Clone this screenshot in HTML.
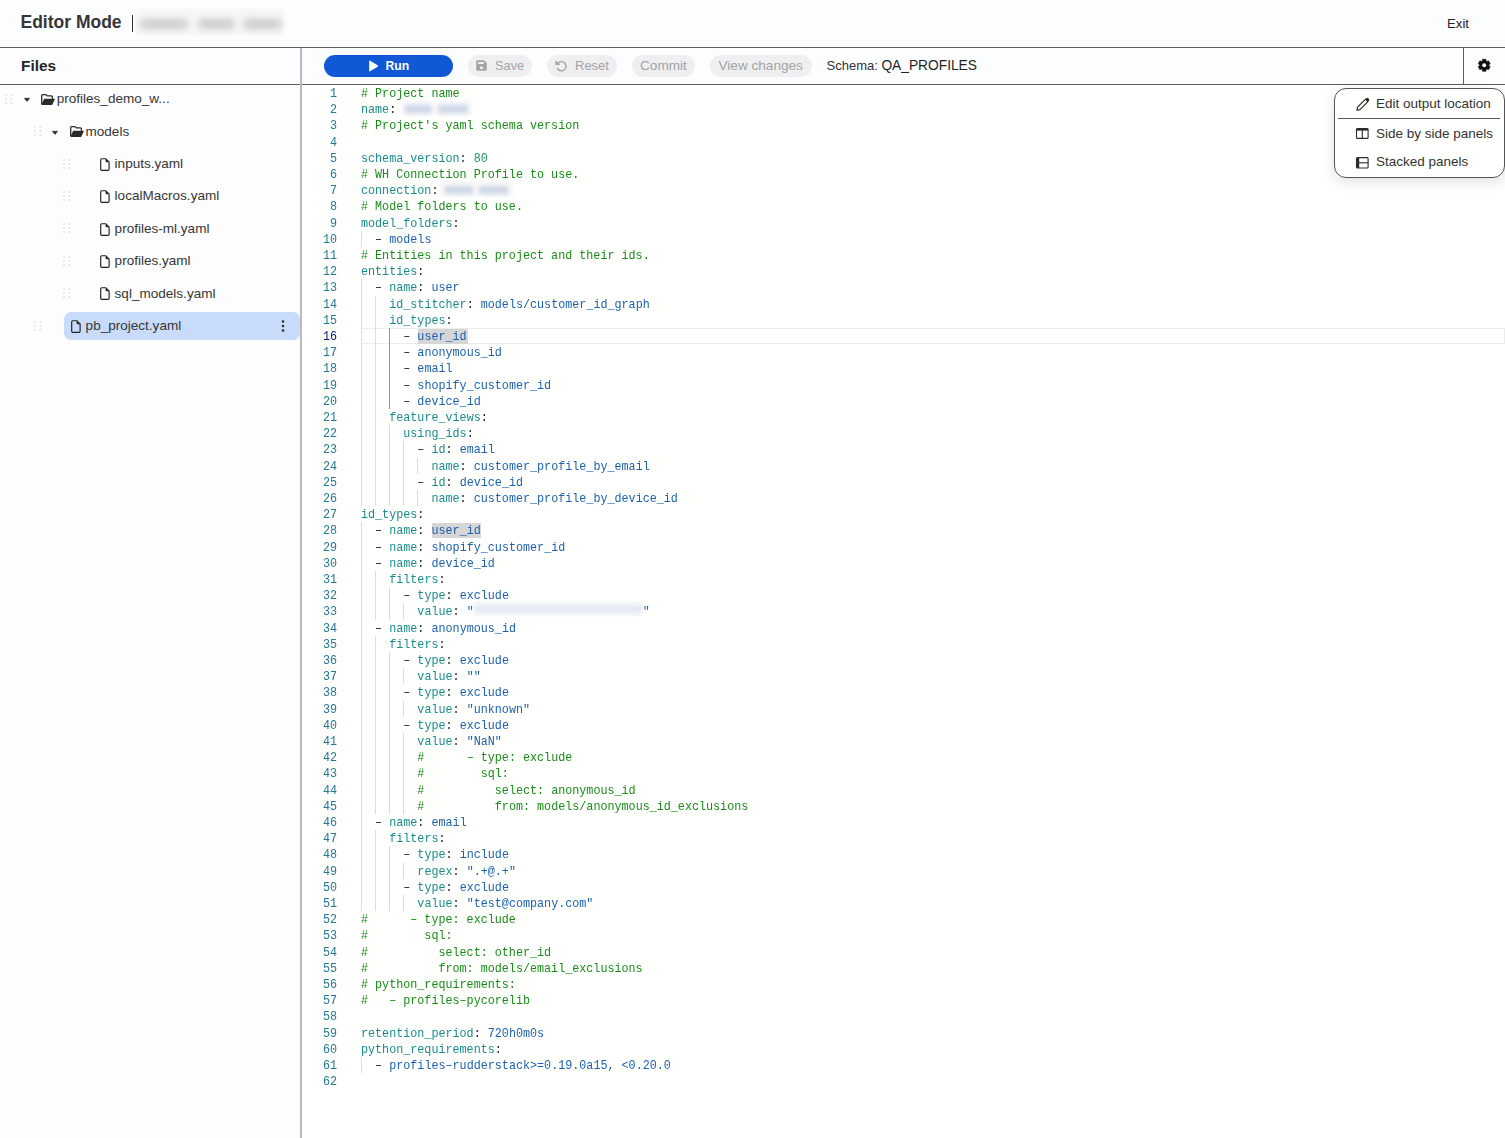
<!DOCTYPE html>
<html><head><meta charset="utf-8">
<style>
*{box-sizing:border-box;margin:0;padding:0}
html,body{width:1505px;height:1138px;overflow:hidden;background:#fffffe;font-family:"Liberation Sans",sans-serif;color:#1f1f1f}
svg{position:absolute;overflow:visible}
#header{position:absolute;left:0;top:0;width:1505px;height:48px;background:#fcfdff;border-bottom:1px solid #5f5f5f}
#title{position:absolute;left:20.5px;top:11px;font-size:17.5px;line-height:22px;font-weight:bold;color:#363636}
#bar{position:absolute;left:131.5px;top:15px;width:1.3px;height:17px;background:#333}
#blurname{position:absolute;left:136px;top:9px;width:148px;height:26px;background:#f7f7f8;filter:blur(1px)}
#blurname i{position:absolute;top:9.5px;height:10px;background:#cbcbcd;filter:blur(3.5px);border-radius:5px}
#exit{position:absolute;left:1447px;top:15px;font-size:13.2px;line-height:18px;color:#262626}
#fileshdr{position:absolute;left:0;top:48px;width:300px;height:37px;background:#fcfdff;border-bottom:1px solid #5f5f5f}
#fileshdr span{position:absolute;left:21px;top:8px;font-size:15.4px;line-height:20px;font-weight:bold;color:#262626}
#vsep{position:absolute;left:300px;top:48px;width:2px;height:1090px;background:#b9b9c0}
#toolbar{position:absolute;left:302px;top:48px;width:1203px;height:37px;background:#fcfdff;border-bottom:1px solid #5f5f5f}
.btn{position:absolute;top:55px;height:22px;border-radius:11px;background:#efeff1;color:#a3a3a6;font-size:13.6px;line-height:22px;white-space:nowrap}
.btn span{position:absolute;top:0}
#run{left:324px;width:129px;background:#1158d6;color:#fff;font-weight:bold;font-size:12.2px}
#schema{position:absolute;left:826.5px;top:56px;font-size:13px;line-height:20px;color:#333;white-space:nowrap}
#schema b{font-weight:normal;font-size:13.75px;color:#1f1f1f}
#gearsep{position:absolute;left:1463px;top:48px;width:1px;height:36px;background:#5f5f5f}
.tree{position:absolute;font-size:13.55px;line-height:20px;color:#363636;white-space:nowrap}
.sel{position:absolute;left:64px;top:312px;width:236px;height:28px;background:#c8dbfa;border-radius:7px}
.num{position:absolute;left:292px;width:45px;height:16.2px;line-height:16.2px;text-align:right;font-family:"Liberation Mono",monospace;font-size:13px;color:#237893;transform:scaleX(0.9026);transform-origin:100% 0}
.num.act{color:#0b216f}
.ln{position:absolute;left:360.8px;opacity:0.9;height:16.2px;line-height:16.2px;font-family:"Liberation Mono",monospace;font-size:13px;white-space:pre;color:#000;transform:scaleX(0.9026);transform-origin:0 0}
.k{color:#008080}.d{color:#000}.s{color:#0451a5}.n{color:#098658}.c{color:#008000}
.hl{}
.hlb{position:absolute;background:#d6d6d6;height:15.4px}
.g{position:absolute;width:1px;height:16.2px;background:#dcdcdc}
.g.ga{background:#939393}
.blur{display:inline-block;position:relative;vertical-align:top;top:-2px;height:15.5px;background:#fafafb}
.b3{top:-3px;height:15px}
.blur i{position:absolute;top:4.5px;height:8px;background:#c6d0e2;filter:blur(2.6px);border-radius:4px}
.b3 i{background:#dfe5f0;top:4px}
#curline{position:absolute;left:361px;top:328px;width:1144px;height:16.2px;border:1px solid #ececec;border-left:none}
#menu{position:absolute;left:1334px;top:88px;width:171px;height:90px;background:#fffffe;border:1px solid #555;border-radius:12px;box-shadow:0 4px 14px rgba(0,0,0,0.12)}
.mi{position:absolute;left:1376px;font-size:13.5px;line-height:18px;color:#333;white-space:nowrap}
#msep{position:absolute;left:1338px;top:118px;width:162px;height:1px;background:#555}
.dots{position:absolute;width:8px;height:10px}
.dots i{position:absolute;width:1.5px;height:1.5px;background:#dcdcdc}
</style></head><body>
<div id="header"></div>
<div id="title">Editor Mode</div>
<div id="bar"></div>
<div id="blurname"><i style="left:4px;width:48px"></i><i style="left:62px;width:37px"></i><i style="left:107px;width:39px"></i></div>
<div id="exit">Exit</div>

<div style="position:absolute;left:0;top:85px;width:300px;height:1053px;background:#fdfdfe"></div>
<div id="fileshdr"><span>Files</span></div>
<div class="sel"></div>
<svg style="left:5.00px;top:92.80px" width="8" height="12"><circle cx="1.00" cy="2.00" r="1" fill="#e3e3e5"/><circle cx="1.00" cy="6.00" r="1" fill="#e3e3e5"/><circle cx="1.00" cy="10.00" r="1" fill="#e3e3e5"/><circle cx="6.40" cy="2.00" r="1" fill="#e3e3e5"/><circle cx="6.40" cy="6.00" r="1" fill="#e3e3e5"/><circle cx="6.40" cy="10.00" r="1" fill="#e3e3e5"/></svg>
<svg style="left:23.50px;top:98.20px" width="6" height="4" viewBox="0 0 6 4"><path d="M0.2 0.2 H5.8 L3 3.6 Z" fill="#1f1f1f" stroke="#1f1f1f" stroke-width="0.4" stroke-linejoin="round"/></svg>
<svg style="left:41.00px;top:93.60px" width="14" height="11" viewBox="0 0 14 11"><path d="M0.7 10.2 V1.6 Q0.7 0.6 1.7 0.6 H4.6 Q5.2 0.6 5.6 1.1 L6.2 1.9 H10.4 Q11.4 1.9 11.4 2.9 V4.8" fill="none" stroke="#2a2a2a" stroke-width="1.3"/><path d="M3.2 4.7 H13.4 Q14 4.7 13.8 5.3 L11.4 10.4 Q11.2 10.9 10.6 10.9 H1 Q0.3 10.9 0.6 10.3 Z" fill="#2a2a2a"/></svg>
<div class="tree" style="left:56.70px;top:88.80px">profiles_demo_w...</div>
<svg style="left:33.80px;top:125.20px" width="8" height="12"><circle cx="1.00" cy="2.00" r="1" fill="#e3e3e5"/><circle cx="1.00" cy="6.00" r="1" fill="#e3e3e5"/><circle cx="1.00" cy="10.00" r="1" fill="#e3e3e5"/><circle cx="6.40" cy="2.00" r="1" fill="#e3e3e5"/><circle cx="6.40" cy="6.00" r="1" fill="#e3e3e5"/><circle cx="6.40" cy="10.00" r="1" fill="#e3e3e5"/></svg>
<svg style="left:52.30px;top:130.60px" width="6" height="4" viewBox="0 0 6 4"><path d="M0.2 0.2 H5.8 L3 3.6 Z" fill="#1f1f1f" stroke="#1f1f1f" stroke-width="0.4" stroke-linejoin="round"/></svg>
<svg style="left:69.80px;top:126.00px" width="14" height="11" viewBox="0 0 14 11"><path d="M0.7 10.2 V1.6 Q0.7 0.6 1.7 0.6 H4.6 Q5.2 0.6 5.6 1.1 L6.2 1.9 H10.4 Q11.4 1.9 11.4 2.9 V4.8" fill="none" stroke="#2a2a2a" stroke-width="1.3"/><path d="M3.2 4.7 H13.4 Q14 4.7 13.8 5.3 L11.4 10.4 Q11.2 10.9 10.6 10.9 H1 Q0.3 10.9 0.6 10.3 Z" fill="#2a2a2a"/></svg>
<div class="tree" style="left:85.50px;top:122.20px">models</div>
<svg style="left:62.60px;top:157.60px" width="8" height="12"><circle cx="1.00" cy="2.00" r="1" fill="#e3e3e5"/><circle cx="1.00" cy="6.00" r="1" fill="#e3e3e5"/><circle cx="1.00" cy="10.00" r="1" fill="#e3e3e5"/><circle cx="6.40" cy="2.00" r="1" fill="#e3e3e5"/><circle cx="6.40" cy="6.00" r="1" fill="#e3e3e5"/><circle cx="6.40" cy="10.00" r="1" fill="#e3e3e5"/></svg>
<svg style="left:99.80px;top:157.70px" width="10" height="13" viewBox="0 0 10 13"><path d="M1.8 0.7 H5.8 L9.1 4 V11.2 Q9.1 12.3 8 12.3 H1.8 Q0.7 12.3 0.7 11.2 V1.8 Q0.7 0.7 1.8 0.7 Z" fill="none" stroke="#1f1f1f" stroke-width="1.15"/><path d="M5.6 0.7 V3.4 Q5.6 4.2 6.4 4.2 H9.1 Z" fill="#2a2a2a"/></svg>
<div class="tree" style="left:114.60px;top:153.60px">inputs.yaml</div>
<svg style="left:62.60px;top:190.00px" width="8" height="12"><circle cx="1.00" cy="2.00" r="1" fill="#e3e3e5"/><circle cx="1.00" cy="6.00" r="1" fill="#e3e3e5"/><circle cx="1.00" cy="10.00" r="1" fill="#e3e3e5"/><circle cx="6.40" cy="2.00" r="1" fill="#e3e3e5"/><circle cx="6.40" cy="6.00" r="1" fill="#e3e3e5"/><circle cx="6.40" cy="10.00" r="1" fill="#e3e3e5"/></svg>
<svg style="left:99.80px;top:190.10px" width="10" height="13" viewBox="0 0 10 13"><path d="M1.8 0.7 H5.8 L9.1 4 V11.2 Q9.1 12.3 8 12.3 H1.8 Q0.7 12.3 0.7 11.2 V1.8 Q0.7 0.7 1.8 0.7 Z" fill="none" stroke="#1f1f1f" stroke-width="1.15"/><path d="M5.6 0.7 V3.4 Q5.6 4.2 6.4 4.2 H9.1 Z" fill="#2a2a2a"/></svg>
<div class="tree" style="left:114.60px;top:186.00px">localMacros.yaml</div>
<svg style="left:62.60px;top:222.40px" width="8" height="12"><circle cx="1.00" cy="2.00" r="1" fill="#e3e3e5"/><circle cx="1.00" cy="6.00" r="1" fill="#e3e3e5"/><circle cx="1.00" cy="10.00" r="1" fill="#e3e3e5"/><circle cx="6.40" cy="2.00" r="1" fill="#e3e3e5"/><circle cx="6.40" cy="6.00" r="1" fill="#e3e3e5"/><circle cx="6.40" cy="10.00" r="1" fill="#e3e3e5"/></svg>
<svg style="left:99.80px;top:222.50px" width="10" height="13" viewBox="0 0 10 13"><path d="M1.8 0.7 H5.8 L9.1 4 V11.2 Q9.1 12.3 8 12.3 H1.8 Q0.7 12.3 0.7 11.2 V1.8 Q0.7 0.7 1.8 0.7 Z" fill="none" stroke="#1f1f1f" stroke-width="1.15"/><path d="M5.6 0.7 V3.4 Q5.6 4.2 6.4 4.2 H9.1 Z" fill="#2a2a2a"/></svg>
<div class="tree" style="left:114.60px;top:219.40px">profiles-ml.yaml</div>
<svg style="left:62.60px;top:254.80px" width="8" height="12"><circle cx="1.00" cy="2.00" r="1" fill="#e3e3e5"/><circle cx="1.00" cy="6.00" r="1" fill="#e3e3e5"/><circle cx="1.00" cy="10.00" r="1" fill="#e3e3e5"/><circle cx="6.40" cy="2.00" r="1" fill="#e3e3e5"/><circle cx="6.40" cy="6.00" r="1" fill="#e3e3e5"/><circle cx="6.40" cy="10.00" r="1" fill="#e3e3e5"/></svg>
<svg style="left:99.80px;top:254.90px" width="10" height="13" viewBox="0 0 10 13"><path d="M1.8 0.7 H5.8 L9.1 4 V11.2 Q9.1 12.3 8 12.3 H1.8 Q0.7 12.3 0.7 11.2 V1.8 Q0.7 0.7 1.8 0.7 Z" fill="none" stroke="#1f1f1f" stroke-width="1.15"/><path d="M5.6 0.7 V3.4 Q5.6 4.2 6.4 4.2 H9.1 Z" fill="#2a2a2a"/></svg>
<div class="tree" style="left:114.60px;top:250.80px">profiles.yaml</div>
<svg style="left:62.60px;top:287.20px" width="8" height="12"><circle cx="1.00" cy="2.00" r="1" fill="#e3e3e5"/><circle cx="1.00" cy="6.00" r="1" fill="#e3e3e5"/><circle cx="1.00" cy="10.00" r="1" fill="#e3e3e5"/><circle cx="6.40" cy="2.00" r="1" fill="#e3e3e5"/><circle cx="6.40" cy="6.00" r="1" fill="#e3e3e5"/><circle cx="6.40" cy="10.00" r="1" fill="#e3e3e5"/></svg>
<svg style="left:99.80px;top:287.30px" width="10" height="13" viewBox="0 0 10 13"><path d="M1.8 0.7 H5.8 L9.1 4 V11.2 Q9.1 12.3 8 12.3 H1.8 Q0.7 12.3 0.7 11.2 V1.8 Q0.7 0.7 1.8 0.7 Z" fill="none" stroke="#1f1f1f" stroke-width="1.15"/><path d="M5.6 0.7 V3.4 Q5.6 4.2 6.4 4.2 H9.1 Z" fill="#2a2a2a"/></svg>
<div class="tree" style="left:114.60px;top:284.20px">sql_models.yaml</div>
<svg style="left:33.80px;top:319.60px" width="8" height="12"><circle cx="1.00" cy="2.00" r="1" fill="#e3e3e5"/><circle cx="1.00" cy="6.00" r="1" fill="#e3e3e5"/><circle cx="1.00" cy="10.00" r="1" fill="#e3e3e5"/><circle cx="6.40" cy="2.00" r="1" fill="#e3e3e5"/><circle cx="6.40" cy="6.00" r="1" fill="#e3e3e5"/><circle cx="6.40" cy="10.00" r="1" fill="#e3e3e5"/></svg>
<svg style="left:71.30px;top:319.70px" width="10" height="13" viewBox="0 0 10 13"><path d="M1.8 0.7 H5.8 L9.1 4 V11.2 Q9.1 12.3 8 12.3 H1.8 Q0.7 12.3 0.7 11.2 V1.8 Q0.7 0.7 1.8 0.7 Z" fill="none" stroke="#1f1f1f" stroke-width="1.15"/><path d="M5.6 0.7 V3.4 Q5.6 4.2 6.4 4.2 H9.1 Z" fill="#2a2a2a"/></svg>
<div class="tree" style="left:85.60px;top:315.60px">pb_project.yaml</div>
<svg style="left:281.40px;top:318.60px" width="4" height="14"><circle cx="2" cy="2.6" r="1.25" fill="#2a2a2a"/><circle cx="2" cy="7" r="1.25" fill="#2a2a2a"/><circle cx="2" cy="11.4" r="1.25" fill="#2a2a2a"/></svg>

<div id="toolbar"></div>
<div id="vsep"></div>
<div class="btn" id="run"><span style="left:61.5px">Run</span></div>
<svg style="left:367.5px;top:59.5px" width="11" height="12" viewBox="0 0 11 12"><path d="M1.2 1.3 Q1.2 0.2 2.2 0.8 L9.6 5.2 Q10.4 6 9.6 6.8 L2.2 11.2 Q1.2 11.8 1.2 10.7 Z" fill="#fff"/></svg>
<div class="btn" style="left:468px;width:64px;font-size:12.8px"><span style="left:27px">Save</span></div>
<div class="btn" style="left:547px;width:70px;font-size:13px"><span style="left:28px">Reset</span></div>
<div class="btn" style="left:632px;width:63px"><span style="left:8px">Commit</span></div>
<div class="btn" style="left:710px;width:102px"><span style="left:8.5px">View changes</span></div>
<svg style="left:476px;top:59.6px" width="11" height="11" viewBox="0 0 11 11"><path d="M1.3 0.2 H8 L10.8 3 V9.7 Q10.8 10.8 9.7 10.8 H1.3 Q0.2 10.8 0.2 9.7 V1.3 Q0.2 0.2 1.3 0.2 Z M2.1 1.9 V4.1 H7.9 V1.9 Z M5.5 6.2 A1.6 1.6 0 1 0 5.5 9.4 A1.6 1.6 0 1 0 5.5 6.2 Z" fill="#a3a3a6" fill-rule="evenodd"/></svg>
<svg style="left:555px;top:59.5px" width="12" height="12" viewBox="0 0 12 12"><path d="M3 3.2 A4.6 4.6 0 1 1 2.4 8.4" fill="none" stroke="#a3a3a6" stroke-width="1.4" stroke-linecap="round"/><path d="M0.6 0.8 L0.9 4.9 L4.9 4.4 Z" fill="#a3a3a6" stroke="#a3a3a6" stroke-width="0.6" stroke-linejoin="round"/></svg>
<svg style="left:0;top:0" width="1505" height="1138"><path d="M1482.28 61.01 L1482.49 59.34 L1485.91 59.34 L1486.12 61.01 L1486.96 61.49 L1488.50 60.84 L1490.22 63.80 L1488.87 64.81 L1488.87 65.79 L1490.22 66.80 L1488.50 69.76 L1486.96 69.11 L1486.12 69.59 L1485.91 71.26 L1482.49 71.26 L1482.28 69.59 L1481.44 69.11 L1479.90 69.76 L1478.18 66.80 L1479.53 65.79 L1479.53 64.81 L1478.18 63.80 L1479.90 60.84 L1481.44 61.49 Z" fill="#111" stroke="#111" stroke-width="0.6" stroke-linejoin="round"/><circle cx="1484.20" cy="65.30" r="1.95" fill="#fcfdff"/></svg>
<div id="schema">Schema: <b>QA_PROFILES</b></div>
<div id="gearsep"></div>

<div id="curline"></div>
<div class="hlb" style="left:418px;top:328.6px;width:49.5px"></div>
<div class="hlb" style="left:431.5px;top:523px;width:49.5px"></div>
<div class="g" style="left:361.00px;top:230.80px"></div>
<div class="g" style="left:361.00px;top:279.40px"></div>
<div class="g" style="left:361.00px;top:295.60px"></div>
<div class="g" style="left:375.00px;top:295.60px"></div>
<div class="g" style="left:361.00px;top:311.80px"></div>
<div class="g" style="left:375.00px;top:311.80px"></div>
<div class="g" style="left:361.00px;top:328.00px"></div>
<div class="g" style="left:375.00px;top:328.00px"></div>
<div class="g ga" style="left:389.00px;top:328.00px"></div>
<div class="g" style="left:361.00px;top:344.20px"></div>
<div class="g" style="left:375.00px;top:344.20px"></div>
<div class="g ga" style="left:389.00px;top:344.20px"></div>
<div class="g" style="left:361.00px;top:360.40px"></div>
<div class="g" style="left:375.00px;top:360.40px"></div>
<div class="g ga" style="left:389.00px;top:360.40px"></div>
<div class="g" style="left:361.00px;top:376.60px"></div>
<div class="g" style="left:375.00px;top:376.60px"></div>
<div class="g ga" style="left:389.00px;top:376.60px"></div>
<div class="g" style="left:361.00px;top:392.80px"></div>
<div class="g" style="left:375.00px;top:392.80px"></div>
<div class="g ga" style="left:389.00px;top:392.80px"></div>
<div class="g" style="left:361.00px;top:409.00px"></div>
<div class="g" style="left:375.00px;top:409.00px"></div>
<div class="g" style="left:361.00px;top:425.20px"></div>
<div class="g" style="left:375.00px;top:425.20px"></div>
<div class="g" style="left:389.00px;top:425.20px"></div>
<div class="g" style="left:361.00px;top:441.40px"></div>
<div class="g" style="left:375.00px;top:441.40px"></div>
<div class="g" style="left:389.00px;top:441.40px"></div>
<div class="g" style="left:403.00px;top:441.40px"></div>
<div class="g" style="left:361.00px;top:457.60px"></div>
<div class="g" style="left:375.00px;top:457.60px"></div>
<div class="g" style="left:389.00px;top:457.60px"></div>
<div class="g" style="left:403.00px;top:457.60px"></div>
<div class="g" style="left:417.00px;top:457.60px"></div>
<div class="g" style="left:361.00px;top:473.80px"></div>
<div class="g" style="left:375.00px;top:473.80px"></div>
<div class="g" style="left:389.00px;top:473.80px"></div>
<div class="g" style="left:403.00px;top:473.80px"></div>
<div class="g" style="left:361.00px;top:490.00px"></div>
<div class="g" style="left:375.00px;top:490.00px"></div>
<div class="g" style="left:389.00px;top:490.00px"></div>
<div class="g" style="left:403.00px;top:490.00px"></div>
<div class="g" style="left:417.00px;top:490.00px"></div>
<div class="g" style="left:361.00px;top:522.40px"></div>
<div class="g" style="left:361.00px;top:538.60px"></div>
<div class="g" style="left:361.00px;top:554.80px"></div>
<div class="g" style="left:361.00px;top:571.00px"></div>
<div class="g" style="left:375.00px;top:571.00px"></div>
<div class="g" style="left:361.00px;top:587.20px"></div>
<div class="g" style="left:375.00px;top:587.20px"></div>
<div class="g" style="left:389.00px;top:587.20px"></div>
<div class="g" style="left:361.00px;top:603.40px"></div>
<div class="g" style="left:375.00px;top:603.40px"></div>
<div class="g" style="left:389.00px;top:603.40px"></div>
<div class="g" style="left:403.00px;top:603.40px"></div>
<div class="g" style="left:361.00px;top:619.60px"></div>
<div class="g" style="left:361.00px;top:635.80px"></div>
<div class="g" style="left:375.00px;top:635.80px"></div>
<div class="g" style="left:361.00px;top:652.00px"></div>
<div class="g" style="left:375.00px;top:652.00px"></div>
<div class="g" style="left:389.00px;top:652.00px"></div>
<div class="g" style="left:361.00px;top:668.20px"></div>
<div class="g" style="left:375.00px;top:668.20px"></div>
<div class="g" style="left:389.00px;top:668.20px"></div>
<div class="g" style="left:403.00px;top:668.20px"></div>
<div class="g" style="left:361.00px;top:684.40px"></div>
<div class="g" style="left:375.00px;top:684.40px"></div>
<div class="g" style="left:389.00px;top:684.40px"></div>
<div class="g" style="left:361.00px;top:700.60px"></div>
<div class="g" style="left:375.00px;top:700.60px"></div>
<div class="g" style="left:389.00px;top:700.60px"></div>
<div class="g" style="left:403.00px;top:700.60px"></div>
<div class="g" style="left:361.00px;top:716.80px"></div>
<div class="g" style="left:375.00px;top:716.80px"></div>
<div class="g" style="left:389.00px;top:716.80px"></div>
<div class="g" style="left:361.00px;top:733.00px"></div>
<div class="g" style="left:375.00px;top:733.00px"></div>
<div class="g" style="left:389.00px;top:733.00px"></div>
<div class="g" style="left:403.00px;top:733.00px"></div>
<div class="g" style="left:361.00px;top:749.20px"></div>
<div class="g" style="left:375.00px;top:749.20px"></div>
<div class="g" style="left:389.00px;top:749.20px"></div>
<div class="g" style="left:403.00px;top:749.20px"></div>
<div class="g" style="left:361.00px;top:765.40px"></div>
<div class="g" style="left:375.00px;top:765.40px"></div>
<div class="g" style="left:389.00px;top:765.40px"></div>
<div class="g" style="left:403.00px;top:765.40px"></div>
<div class="g" style="left:361.00px;top:781.60px"></div>
<div class="g" style="left:375.00px;top:781.60px"></div>
<div class="g" style="left:389.00px;top:781.60px"></div>
<div class="g" style="left:403.00px;top:781.60px"></div>
<div class="g" style="left:361.00px;top:797.80px"></div>
<div class="g" style="left:375.00px;top:797.80px"></div>
<div class="g" style="left:389.00px;top:797.80px"></div>
<div class="g" style="left:403.00px;top:797.80px"></div>
<div class="g" style="left:361.00px;top:814.00px"></div>
<div class="g" style="left:361.00px;top:830.20px"></div>
<div class="g" style="left:375.00px;top:830.20px"></div>
<div class="g" style="left:361.00px;top:846.40px"></div>
<div class="g" style="left:375.00px;top:846.40px"></div>
<div class="g" style="left:389.00px;top:846.40px"></div>
<div class="g" style="left:361.00px;top:862.60px"></div>
<div class="g" style="left:375.00px;top:862.60px"></div>
<div class="g" style="left:389.00px;top:862.60px"></div>
<div class="g" style="left:403.00px;top:862.60px"></div>
<div class="g" style="left:361.00px;top:878.80px"></div>
<div class="g" style="left:375.00px;top:878.80px"></div>
<div class="g" style="left:389.00px;top:878.80px"></div>
<div class="g" style="left:361.00px;top:895.00px"></div>
<div class="g" style="left:375.00px;top:895.00px"></div>
<div class="g" style="left:389.00px;top:895.00px"></div>
<div class="g" style="left:403.00px;top:895.00px"></div>
<div class="g" style="left:361.00px;top:1057.00px"></div>
<div class="num" style="top:86.00px">1</div>
<div class="num" style="top:102.20px">2</div>
<div class="num" style="top:118.40px">3</div>
<div class="num" style="top:134.60px">4</div>
<div class="num" style="top:150.80px">5</div>
<div class="num" style="top:167.00px">6</div>
<div class="num" style="top:183.20px">7</div>
<div class="num" style="top:199.40px">8</div>
<div class="num" style="top:215.60px">9</div>
<div class="num" style="top:231.80px">10</div>
<div class="num" style="top:248.00px">11</div>
<div class="num" style="top:264.20px">12</div>
<div class="num" style="top:280.40px">13</div>
<div class="num" style="top:296.60px">14</div>
<div class="num" style="top:312.80px">15</div>
<div class="num act" style="top:329.00px">16</div>
<div class="num" style="top:345.20px">17</div>
<div class="num" style="top:361.40px">18</div>
<div class="num" style="top:377.60px">19</div>
<div class="num" style="top:393.80px">20</div>
<div class="num" style="top:410.00px">21</div>
<div class="num" style="top:426.20px">22</div>
<div class="num" style="top:442.40px">23</div>
<div class="num" style="top:458.60px">24</div>
<div class="num" style="top:474.80px">25</div>
<div class="num" style="top:491.00px">26</div>
<div class="num" style="top:507.20px">27</div>
<div class="num" style="top:523.40px">28</div>
<div class="num" style="top:539.60px">29</div>
<div class="num" style="top:555.80px">30</div>
<div class="num" style="top:572.00px">31</div>
<div class="num" style="top:588.20px">32</div>
<div class="num" style="top:604.40px">33</div>
<div class="num" style="top:620.60px">34</div>
<div class="num" style="top:636.80px">35</div>
<div class="num" style="top:653.00px">36</div>
<div class="num" style="top:669.20px">37</div>
<div class="num" style="top:685.40px">38</div>
<div class="num" style="top:701.60px">39</div>
<div class="num" style="top:717.80px">40</div>
<div class="num" style="top:734.00px">41</div>
<div class="num" style="top:750.20px">42</div>
<div class="num" style="top:766.40px">43</div>
<div class="num" style="top:782.60px">44</div>
<div class="num" style="top:798.80px">45</div>
<div class="num" style="top:815.00px">46</div>
<div class="num" style="top:831.20px">47</div>
<div class="num" style="top:847.40px">48</div>
<div class="num" style="top:863.60px">49</div>
<div class="num" style="top:879.80px">50</div>
<div class="num" style="top:896.00px">51</div>
<div class="num" style="top:912.20px">52</div>
<div class="num" style="top:928.40px">53</div>
<div class="num" style="top:944.60px">54</div>
<div class="num" style="top:960.80px">55</div>
<div class="num" style="top:977.00px">56</div>
<div class="num" style="top:993.20px">57</div>
<div class="num" style="top:1009.40px">58</div>
<div class="num" style="top:1025.60px">59</div>
<div class="num" style="top:1041.80px">60</div>
<div class="num" style="top:1058.00px">61</div>
<div class="num" style="top:1074.20px">62</div>
<div class="ln" style="top:86.00px"><span class="c"># Project name</span></div>
<div class="ln" style="top:102.20px"><span class="k">name</span><span class="d">:</span> <span class="blur b1" style="width:77.5px;margin-left:-1px"><i style="left:2px;width:31px"></i><i style="left:39px;width:34px"></i></span></div>
<div class="ln" style="top:118.40px"><span class="c"># Project's yaml schema version</span></div>
<div class="ln" style="top:134.60px"></div>
<div class="ln" style="top:150.80px"><span class="k">schema_version</span><span class="d">:</span> <span class="n">80</span></div>
<div class="ln" style="top:167.00px"><span class="c"># WH Connection Profile to use.</span></div>
<div class="ln" style="top:183.20px"><span class="k">connection</span><span class="d">:</span> <span class="blur b2" style="width:82px;margin-left:-6.5px"><i style="left:4.5px;width:33px"></i><i style="left:43px;width:34px"></i></span></div>
<div class="ln" style="top:199.40px"><span class="c"># Model folders to use.</span></div>
<div class="ln" style="top:215.60px"><span class="k">model_folders</span><span class="d">:</span></div>
<div class="ln" style="top:231.80px">  <span class="d">&#8211;</span> <span class="s">models</span></div>
<div class="ln" style="top:248.00px"><span class="c"># Entities in this project and their ids.</span></div>
<div class="ln" style="top:264.20px"><span class="k">entities</span><span class="d">:</span></div>
<div class="ln" style="top:280.40px">  <span class="d">&#8211;</span> <span class="k">name</span><span class="d">:</span> <span class="s">user</span></div>
<div class="ln" style="top:296.60px">    <span class="k">id_stitcher</span><span class="d">:</span> <span class="s">models/customer_id_graph</span></div>
<div class="ln" style="top:312.80px">    <span class="k">id_types</span><span class="d">:</span></div>
<div class="ln" style="top:329.00px">      <span class="d">&#8211;</span> <span class="s hl">user_id</span></div>
<div class="ln" style="top:345.20px">      <span class="d">&#8211;</span> <span class="s">anonymous_id</span></div>
<div class="ln" style="top:361.40px">      <span class="d">&#8211;</span> <span class="s">email</span></div>
<div class="ln" style="top:377.60px">      <span class="d">&#8211;</span> <span class="s">shopify_customer_id</span></div>
<div class="ln" style="top:393.80px">      <span class="d">&#8211;</span> <span class="s">device_id</span></div>
<div class="ln" style="top:410.00px">    <span class="k">feature_views</span><span class="d">:</span></div>
<div class="ln" style="top:426.20px">      <span class="k">using_ids</span><span class="d">:</span></div>
<div class="ln" style="top:442.40px">        <span class="d">&#8211;</span> <span class="k">id</span><span class="d">:</span> <span class="s">email</span></div>
<div class="ln" style="top:458.60px">          <span class="k">name</span><span class="d">:</span> <span class="s">customer_profile_by_email</span></div>
<div class="ln" style="top:474.80px">        <span class="d">&#8211;</span> <span class="k">id</span><span class="d">:</span> <span class="s">device_id</span></div>
<div class="ln" style="top:491.00px">          <span class="k">name</span><span class="d">:</span> <span class="s">customer_profile_by_device_id</span></div>
<div class="ln" style="top:507.20px"><span class="k">id_types</span><span class="d">:</span></div>
<div class="ln" style="top:523.40px">  <span class="d">&#8211;</span> <span class="k">name</span><span class="d">:</span> <span class="s hl">user_id</span></div>
<div class="ln" style="top:539.60px">  <span class="d">&#8211;</span> <span class="k">name</span><span class="d">:</span> <span class="s">shopify_customer_id</span></div>
<div class="ln" style="top:555.80px">  <span class="d">&#8211;</span> <span class="k">name</span><span class="d">:</span> <span class="s">device_id</span></div>
<div class="ln" style="top:572.00px">    <span class="k">filters</span><span class="d">:</span></div>
<div class="ln" style="top:588.20px">      <span class="d">&#8211;</span> <span class="k">type</span><span class="d">:</span> <span class="s">exclude</span></div>
<div class="ln" style="top:604.40px">        <span class="k">value</span><span class="d">:</span> <span class="s">"<span class="blur b3" style="width:187.2px"><i style="left:0;width:187px"></i></span>"</span></div>
<div class="ln" style="top:620.60px">  <span class="d">&#8211;</span> <span class="k">name</span><span class="d">:</span> <span class="s">anonymous_id</span></div>
<div class="ln" style="top:636.80px">    <span class="k">filters</span><span class="d">:</span></div>
<div class="ln" style="top:653.00px">      <span class="d">&#8211;</span> <span class="k">type</span><span class="d">:</span> <span class="s">exclude</span></div>
<div class="ln" style="top:669.20px">        <span class="k">value</span><span class="d">:</span> <span class="s">""</span></div>
<div class="ln" style="top:685.40px">      <span class="d">&#8211;</span> <span class="k">type</span><span class="d">:</span> <span class="s">exclude</span></div>
<div class="ln" style="top:701.60px">        <span class="k">value</span><span class="d">:</span> <span class="s">"unknown"</span></div>
<div class="ln" style="top:717.80px">      <span class="d">&#8211;</span> <span class="k">type</span><span class="d">:</span> <span class="s">exclude</span></div>
<div class="ln" style="top:734.00px">        <span class="k">value</span><span class="d">:</span> <span class="s">"NaN"</span></div>
<div class="ln" style="top:750.20px">        <span class="c">#      &#8211; type: exclude</span></div>
<div class="ln" style="top:766.40px">        <span class="c">#        sql:</span></div>
<div class="ln" style="top:782.60px">        <span class="c">#          select: anonymous_id</span></div>
<div class="ln" style="top:798.80px">        <span class="c">#          from: models/anonymous_id_exclusions</span></div>
<div class="ln" style="top:815.00px">  <span class="d">&#8211;</span> <span class="k">name</span><span class="d">:</span> <span class="s">email</span></div>
<div class="ln" style="top:831.20px">    <span class="k">filters</span><span class="d">:</span></div>
<div class="ln" style="top:847.40px">      <span class="d">&#8211;</span> <span class="k">type</span><span class="d">:</span> <span class="s">include</span></div>
<div class="ln" style="top:863.60px">        <span class="k">regex</span><span class="d">:</span> <span class="s">".+@.+"</span></div>
<div class="ln" style="top:879.80px">      <span class="d">&#8211;</span> <span class="k">type</span><span class="d">:</span> <span class="s">exclude</span></div>
<div class="ln" style="top:896.00px">        <span class="k">value</span><span class="d">:</span> <span class="s">"test@company.com"</span></div>
<div class="ln" style="top:912.20px"><span class="c">#      &#8211; type: exclude</span></div>
<div class="ln" style="top:928.40px"><span class="c">#        sql:</span></div>
<div class="ln" style="top:944.60px"><span class="c">#          select: other_id</span></div>
<div class="ln" style="top:960.80px"><span class="c">#          from: models/email_exclusions</span></div>
<div class="ln" style="top:977.00px"><span class="c"># python_requirements:</span></div>
<div class="ln" style="top:993.20px"><span class="c">#   &#8211; profiles&#8211;pycorelib</span></div>
<div class="ln" style="top:1009.40px"></div>
<div class="ln" style="top:1025.60px"><span class="k">retention_period</span><span class="d">:</span> <span class="s">720h0m0s</span></div>
<div class="ln" style="top:1041.80px"><span class="k">python_requirements</span><span class="d">:</span></div>
<div class="ln" style="top:1058.00px">  <span class="d">&#8211;</span> <span class="s">profiles&#8211;rudderstack&gt;=0.19.0a15, &lt;0.20.0</span></div>
<div class="ln" style="top:1074.20px"></div>

<div id="menu"></div>
<div id="msep"></div>
<div class="mi" style="top:95.2px">Edit output location</div>
<div class="mi" style="top:125.2px">Side by side panels</div>
<div class="mi" style="top:153.2px">Stacked panels</div>
<svg style="left:1355.5px;top:96.5px" width="14" height="14" viewBox="0 0 14 14"><path d="M1 13.2 L1.6 10.2 L9.6 2.2 L12 4.6 L4 12.6 Z" fill="none" stroke="#262626" stroke-width="1.15" stroke-linejoin="round"/><path d="M9.2 2.6 L10.6 1.2 Q11.4 0.4 12.2 1.2 L13 2 Q13.8 2.8 13 3.6 L11.6 5 Z" fill="#262626"/></svg>
<svg style="left:1356px;top:127.8px" width="13" height="11" viewBox="0 0 13 11"><path d="M1.5 0.6 H11.1 Q12.1 0.6 12.1 1.6 V9.4 Q12.1 10.4 11.1 10.4 H1.5 Q0.5 10.4 0.5 9.4 V1.6 Q0.5 0.6 1.5 0.6 Z" fill="none" stroke="#2a2a2a" stroke-width="1.1"/><path d="M0.5 0.6 H12.1 V2.6 H0.5 Z" fill="#2a2a2a"/><path d="M6.3 2 V10.4" stroke="#2a2a2a" stroke-width="1.1"/></svg>
<svg style="left:1356px;top:156.8px" width="13" height="12" viewBox="0 0 13 12"><path d="M1.5 0.6 H11.1 Q12.1 0.6 12.1 1.6 V10 Q12.1 11 11.1 11 H1.5 Q0.5 11 0.5 10 V1.6 Q0.5 0.6 1.5 0.6 Z" fill="none" stroke="#2a2a2a" stroke-width="1.1"/><path d="M1.5 0.6 H3.2 V11 H1.5 Q0.5 11 0.5 10 V1.6 Q0.5 0.6 1.5 0.6 Z" fill="#2a2a2a"/><path d="M2.5 5.8 H12.1" stroke="#2a2a2a" stroke-width="1.1"/></svg>
</body></html>
